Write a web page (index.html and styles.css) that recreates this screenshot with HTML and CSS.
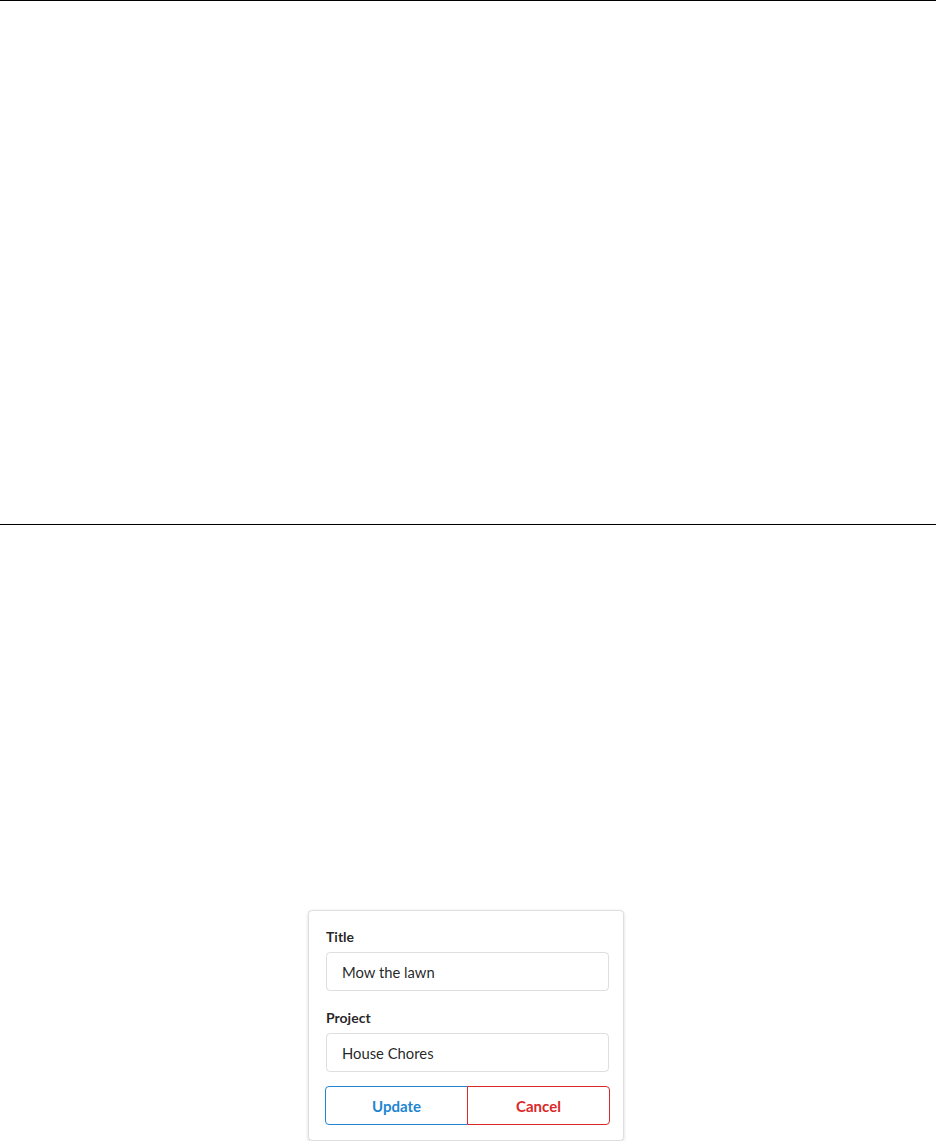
FILE: index.html
```html
<!DOCTYPE html>
<html>
<head>
<meta charset="utf-8">
<link rel="stylesheet" href="styles.css">
</head>
<body>
<div class="stage"></div>
<div class="area">
  <form class="card">
    <div class="field">
      <label class="label">Title</label>
      <div class="input">Mow the lawn</div>
    </div>
    <div class="field">
      <label class="label">Project</label>
      <div class="input">House Chores</div>
    </div>
    <div class="buttons">
      <button type="button" class="btn btn-blue">Update</button>
      <button type="button" class="btn btn-red">Cancel</button>
    </div>
  </form>
</div>
</body>
</html>
```
FILE: styles.css
```css
html, body {
  margin: 0;
  padding: 0;
  background: #fff;
}
body {
  font-family: Lato, "Helvetica Neue", Arial, sans-serif;
  font-size: 14px;
  color: rgba(0, 0, 0, 0.87);
}
.stage {
  height: 523px;
  border-top: 1px solid #000;
  border-bottom: 1px solid #000;
}
.area {
  padding-top: 385px;
  display: flex;
}
.card {
  margin-left: 308px;
  width: 316px;
  box-sizing: border-box;
  border: 1px solid rgba(34, 36, 38, 0.15);
  border-radius: 4px;
  box-shadow: 0 1px 3px 0 rgba(34, 36, 38, 0.18);
  padding: 16px 14px 15px 17px;
  display: flex;
  flex-direction: column;
}
.field {
  display: flex;
  flex-direction: column;
  margin-bottom: 17px;
}
.field + .field {
  margin-bottom: 14px;
}
.label {
  font-size: 14px;
  font-weight: 700;
  line-height: 19px;
  margin-bottom: 6px;
  color: rgba(0, 0, 0, 0.87);
}
.input {
  height: 39px;
  box-sizing: border-box;
  border: 1px solid rgba(34, 36, 38, 0.15);
  border-radius: 4px;
  padding: 0 15px;
  display: flex;
  align-items: center;
  font-size: 14.8px;
  color: rgba(0, 0, 0, 0.87);
}
.buttons {
  display: flex;
  margin: 0 -1px;
}
.btn {
  flex: 1;
  height: 39px;
  box-sizing: border-box;
  background: #fff;
  font-family: Lato, "Helvetica Neue", Arial, sans-serif;
  font-size: 15px;
  font-weight: 700;
  padding: 0;
  cursor: pointer;
}
.btn-blue {
  color: #2185d0;
  border: 1px solid #2185d0;
  border-radius: 4px 0 0 4px;
}
.btn-red {
  color: #db2828;
  border: 1px solid #db2828;
  border-radius: 0 4px 4px 0;
  margin-left: -1px;
}
```
